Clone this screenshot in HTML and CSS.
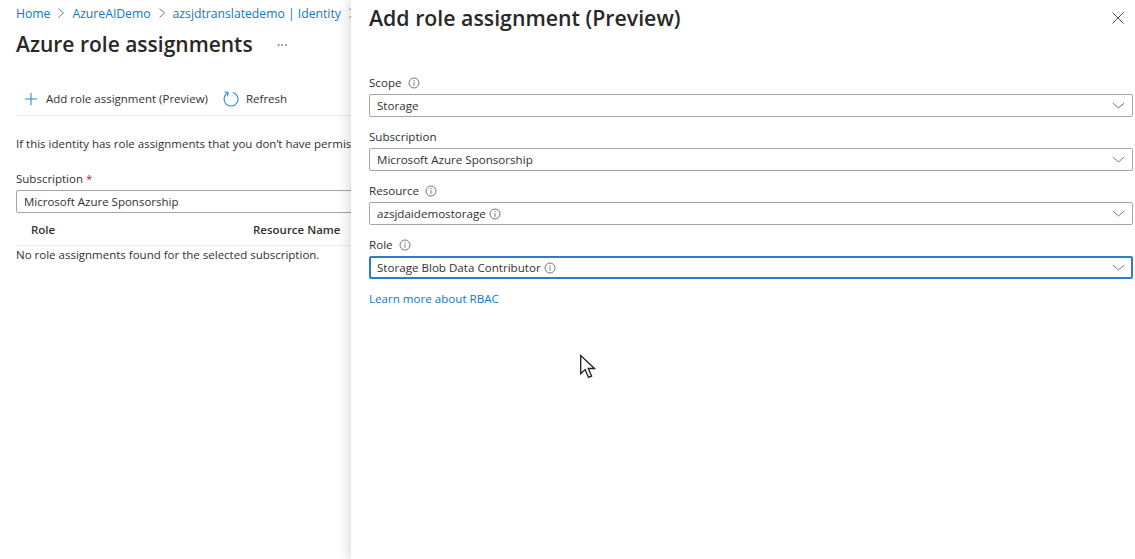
FILE: index.html
```html
<!DOCTYPE html>
<html lang="en">
<head>
    <meta charset="UTF-8">
    <meta name="viewport" content="width=device-width, initial-scale=1.0">
    <title>Add role assignment (Preview)</title>
    <link rel="stylesheet" href="styles.css">
</head>
<body>
    <div class="blade">
        <nav class="crumbs">
            <a href="#">Home</a>
            <svg class="crumb-sep" viewBox="0 0 8 12"><path d="M1.5 1.5 6.5 6 1.5 10.500"/></svg>
            <a href="#">AzureAIDemo</a>
            <svg class="crumb-sep" viewBox="0 0 8 12"><path d="M1.5 1.5 6.5 6 1.5 10.500"/></svg>
            <a href="#">azsjdtranslatedemo | Identity</a>
            <svg class="crumb-sep" viewBox="0 0 8 12"><path d="M1.5 1.5 6.5 6 1.5 10.500"/></svg>
        </nav>
        <div class="title-row">
            <h1 class="blade-title">Azure role assignments</h1>
            <span class="more">···</span>
        </div>
        <div class="toolbar">
            <button class="tool add-tool">
                <svg class="tool-icon" viewBox="0 0 16 16"><path d="M8 1v14M1 8h14"/></svg>
                Add role assignment (Preview)
            </button>
            <button class="tool">
                <svg class="tool-icon refresh" viewBox="0 0 18 18"><path d="M5.500 2.200A7.800 7.800 0 1 0 11 1.600"/><path d="M2 .8 5.800 2.200 5 6"/></svg>
                Refresh
            </button>
        </div>
        <p class="notice">If this identity has role assignments that you don’t have permis</p>
        <label class="sub-label">Subscription <span class="req">*</span></label>
        <div class="sub-box">Microsoft Azure Sponsorship</div>
        <div class="table-head">
            <span class="col-role">Role</span>
            <span class="col-res">Resource Name</span>
        </div>
        <p class="empty">No role assignments found for the selected subscription.</p>
    </div>

    <div class="panel">
        <div class="panel-head">
            <h2 class="panel-title">Add role assignment (Preview)</h2>
            <svg class="close" viewBox="0 0 12 12"><path d="M.5.5l11 11M11.500.5l-11 11"/></svg>
        </div>

        <div class="field scope-field">
            <div class="field-label">Scope <svg class="info" viewBox="0 0 12 12"><circle cx="6" cy="6" r="5"/><path d="M6 5.200v3.600M6 3v1.200"/></svg></div>
            <div class="select"><span class="select-text">Storage</span><svg class="chev" viewBox="0 0 16 8"><path d="M1 1l7 6 7-6"/></svg></div>
        </div>
        <div class="field">
            <div class="field-label">Subscription</div>
            <div class="select"><span class="select-text">Microsoft Azure Sponsorship</span><svg class="chev" viewBox="0 0 16 8"><path d="M1 1l7 6 7-6"/></svg></div>
        </div>
        <div class="field">
            <div class="field-label">Resource <svg class="info" viewBox="0 0 12 12"><circle cx="6" cy="6" r="5"/><path d="M6 5.200v3.600M6 3v1.200"/></svg></div>
            <div class="select"><span class="select-text">azsjdaidemostorage <svg class="info" viewBox="0 0 12 12"><circle cx="6" cy="6" r="5"/><path d="M6 5.200v3.600M6 3v1.200"/></svg></span><svg class="chev" viewBox="0 0 16 8"><path d="M1 1l7 6 7-6"/></svg></div>
        </div>
        <div class="field">
            <div class="field-label">Role <svg class="info" viewBox="0 0 12 12"><circle cx="6" cy="6" r="5"/><path d="M6 5.200v3.600M6 3v1.200"/></svg></div>
            <div class="select focused"><span class="select-text">Storage Blob Data Contributor <svg class="info" viewBox="0 0 12 12"><circle cx="6" cy="6" r="5"/><path d="M6 5.200v3.600M6 3v1.200"/></svg></span><svg class="chev" viewBox="0 0 16 8"><path d="M1 1l7 6 7-6"/></svg></div>
        </div>
        <a class="learn" href="#">Learn more about RBAC</a>
    </div>

    <svg class="pointer" viewBox="0 0 18 25"><path d="M1.500 1.500V19l4.300-4 3.200 7.500 3-1.300-3.200-7.300h6z"/></svg>
</body>
</html>
```

FILE: styles.css
```css
body {
    display: flex;
    margin: 0;
    height: 100vh;
    overflow: hidden;
    background: #fff;
    color: #323130;
    font-family: "Open Sans", "Noto Sans", Arial, sans-serif;
    font-size: 11.600px;
}
a {
    color: #0f78c8;
    text-decoration: none;
}

/* left blade */
.blade {
    width: 351px;
    flex-shrink: 0;
    box-sizing: border-box;
    padding-left: 16px;
    overflow: hidden;
    white-space: nowrap;
    font-size: 11.500px;
}
.crumbs {
    display: flex;
    align-items: center;
    height: 26px;
    font-size: 12.200px;
}
.crumb-sep {
    flex-shrink: 0;
    width: 8px;
    height: 12px;
    margin: 0 7px;
    fill: none;
    stroke: #777;
    stroke-width: 1;
}
.title-row {
    display: flex;
    align-items: center;
    height: 36px;
}
.blade-title {
    margin: 0;
    font-size: 21px;
    font-weight: 600;
    color: #292827;
}
.more {
    margin-left: 24px;
    font-size: 14px;
    color: #777;
}
.toolbar {
    display: flex;
    align-items: center;
    height: 29px;
    margin-top: 18px;
    padding: 4px 0 2px;
    border-bottom: 1px solid #e6e6e6;
}
.tool {
    display: flex;
    align-items: center;
    padding: 0;
    border: 0;
    background: none;
    font: inherit;
    color: #323130;
}
.add-tool {
    margin: 0 15px 0 8px;
}
.tool-icon {
    width: 14px;
    height: 14px;
    margin-right: 8px;
    fill: none;
    stroke: #2b88d8;
    stroke-width: 1.200;
}
.refresh {
    width: 16px;
    height: 16px;
    margin-right: 7px;
}
.notice {
    margin: 19px 0 0;
    height: 17px;
    line-height: 17px;
}
.sub-label {
    display: block;
    margin-top: 18px;
    height: 17px;
    line-height: 17px;
}
.req {
    color: #a4262c;
}
.sub-box {
    box-sizing: border-box;
    height: 23px;
    margin-top: 3px;
    margin-right: -4px;
    padding-left: 7px;
    border: 1px solid #a6a6a6;
    border-radius: 2px;
    line-height: 21px;
}
.table-head {
    display: flex;
    align-items: center;
    height: 32px;
    border-bottom: 1px solid #ececec;
    font-weight: 600;
}
.col-role {
    width: 222px;
    padding-left: 15px;
}
.empty {
    margin: 0;
    height: 18px;
    line-height: 18px;
}

/* right panel */
.panel {
    position: relative;
    flex: 1;
    box-sizing: border-box;
    padding: 0 2px 0 18px;
    box-shadow: -4px 0 10px rgba(0, 0, 0, 0.12);
}
.panel-head {
    display: flex;
    align-items: center;
    justify-content: space-between;
    height: 35px;
    padding-right: 9px;
}
.panel-title {
    margin: 0;
    font-size: 21.300px;
    font-weight: 600;
    color: #292827;
}
.close {
    width: 12px;
    height: 12px;
    fill: none;
    stroke: #555;
    stroke-width: 1;
}
.field {
    margin-bottom: 11px;
}
.scope-field {
    margin-top: 39px;
}
.field-label {
    display: flex;
    align-items: center;
    gap: 6px;
    height: 17px;
    margin-bottom: 3px;
}
.info {
    width: 12px;
    height: 12px;
    fill: none;
    stroke: #777;
    stroke-width: 1;
    vertical-align: -2px;
}
.select {
    display: flex;
    align-items: center;
    justify-content: space-between;
    box-sizing: border-box;
    height: 23px;
    padding: 0 7px 0 7px;
    border: 1px solid #a6a6a6;
    border-radius: 2px;
}
.select-text {
    white-space: nowrap;
}
.focused {
    border: 2px solid #2b7cd3;
    padding-left: 6px;
    padding-right: 6px;
}
.chev {
    width: 13px;
    height: 7px;
    fill: none;
    stroke: #555;
    stroke-width: 1;
}
.learn {
    display: block;
    margin-top: 11px;
    line-height: 17px;
}
.pointer {
    position: absolute;
    left: 579px;
    top: 354px;
    width: 19px;
    height: 26px;
    fill: #fff;
    stroke: #222;
    stroke-width: 1.300;
}
```
